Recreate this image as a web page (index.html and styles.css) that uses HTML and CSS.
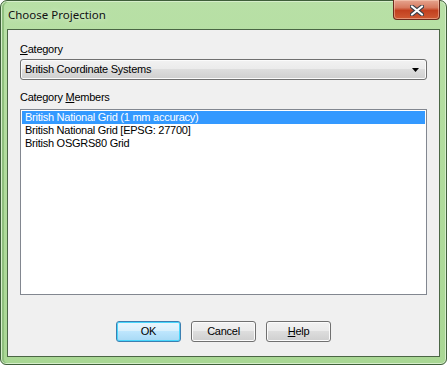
FILE: index.html
```html
<!DOCTYPE html>
<html>
<head>
<meta charset="utf-8">
<link rel="stylesheet" href="styles.css">
</head>
<body>
<div class="window">
  <div class="titlebar">
    <span class="title">Choose Projection</span>
    <div class="close">
      <svg width="14" height="11" viewBox="0 0 14 11">
        <path d="M2 1.5 L12 9.5 M12 1.5 L2 9.5" stroke="#3b3f48" stroke-width="4.2" stroke-linecap="round"/>
        <path d="M2 1.5 L12 9.5 M12 1.5 L2 9.5" stroke="#ffffff" stroke-width="2.2" stroke-linecap="round"/>
      </svg>
    </div>
  </div>
  <div class="client">
    <div class="label"><u>C</u>ategory</div>
    <div class="combo">
      <span class="combo-text">British Coordinate Systems</span>
      <svg class="arrow" width="7" height="4" viewBox="0 0 7 4"><path d="M0 0 H7 L3.5 4 Z" fill="#000"/></svg>
    </div>
    <div class="label label2">Category <u>M</u>embers</div>
    <div class="listbox">
      <div class="item selected">British National Grid (1 mm accuracy)</div>
      <div class="item">British National Grid [EPSG: 27700]</div>
      <div class="item">British OSGRS80 Grid</div>
    </div>
    <div class="buttons">
      <div class="btn default">OK</div>
      <div class="btn">Cancel</div>
      <div class="btn"><u>H</u>elp</div>
    </div>
  </div>
</div>
</body>
</html>
```
FILE: styles.css
```css
html, body {
  margin: 0;
  padding: 0;
  background: #ffffff;
}
.window {
  box-sizing: border-box;
  width: 447px;
  height: 365px;
  border: 1px solid #3f5f3a;
  border-radius: 7px 7px 6px 6px;
  background: linear-gradient(180deg, #b8e0a6 0%, #b3dd9f 30%, #a9d794 100%);
  padding: 0 6px 7px 6px;
  display: flex;
  flex-direction: column;
  box-shadow: inset 0 0 0 1px #d6eecb, inset 2px 0 0 1px #8fbf7e;
}
.titlebar {
  height: 28px;
  display: flex;
  align-items: flex-start;
}
.title {
  font-family: "Noto Sans", sans-serif;
  font-size: 11.5px;
  color: #111111;
  margin-top: 6px;
  margin-left: 1px;
  text-shadow: 0 0 6px rgba(255,255,255,0.7);
}
.close {
  margin-left: auto;
  margin-top: -1px;
  margin-right: 0;
  box-sizing: border-box;
  width: 47px;
  height: 20px;
  border: 1px solid #6a2a1c;
  border-top: none;
  border-radius: 0 0 4px 4px;
  background: linear-gradient(180deg, #e6a590 0%, #d77a5f 40%, #c2401f 55%, #cf5a33 100%);
  box-shadow: inset 0 0 0 1px rgba(255,220,200,0.45);
  display: flex;
  align-items: center;
  justify-content: center;
}
.close svg {
  display: block;
  margin-top: 1px;
}
.client {
  flex: 1;
  border: 1px solid #4b6645;
  background: #f0f0f0;
  padding: 13px 12px 0 12px;
  display: flex;
  flex-direction: column;
  font-family: "Liberation Sans", Arial, sans-serif;
  font-size: 11px;
  letter-spacing: -0.25px;
  color: #000;
}
.label {
  line-height: 13px;
  height: 13px;
}
.label2 {
  margin-top: 11px;
}
.combo {
  margin-top: 3px;
  box-sizing: border-box;
  height: 21px;
  border: 1px solid #707070;
  border-radius: 3px;
  background: linear-gradient(180deg, #f2f2f2 0%, #ebebeb 45%, #dddddd 50%, #cfcfcf 100%);
  box-shadow: inset 0 0 0 1px #fbfbfb;
  display: flex;
  align-items: center;
  padding: 0 7px 0 4px;
}
.combo-text {
  flex: 1;
  line-height: 13px;
}
.arrow {
  display: block;
}
.listbox {
  margin-top: 5px;
  box-sizing: border-box;
  height: 186px;
  border: 1px solid #828790;
  background: #ffffff;
  padding: 1px;
}
.item {
  height: 13px;
  line-height: 13px;
  padding-left: 3px;
  white-space: nowrap;
}
.item.selected {
  background: #3399ff;
  color: #ffffff;
}
.buttons {
  margin-top: 26px;
  display: flex;
  justify-content: center;
  gap: 10px;
  padding-right: 0;
}
.btn {
  box-sizing: border-box;
  width: 65px;
  height: 21px;
  border: 1px solid #707070;
  border-radius: 3px;
  background: linear-gradient(180deg, #f2f2f2 0%, #ebebeb 45%, #dddddd 50%, #cfcfcf 100%);
  box-shadow: inset 0 0 0 1px #fbfbfb;
  display: flex;
  align-items: center;
  justify-content: center;
  line-height: 13px;
}
.btn.default {
  border-color: #3c7fb1;
  background: linear-gradient(180deg, #eaf6fd 0%, #d9f0fc 45%, #bee6fd 50%, #a7d9f5 100%);
  box-shadow: inset 0 0 0 1px #48d6fb;
}
```
